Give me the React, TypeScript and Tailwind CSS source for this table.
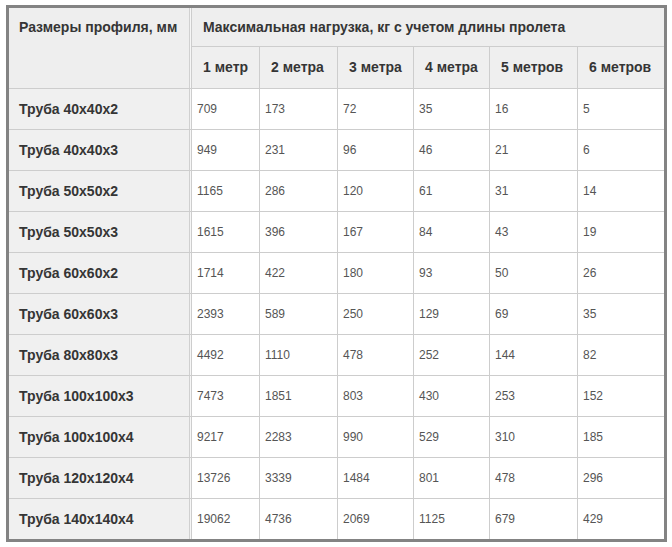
import React from "react";

const rows: [string, number[]][] = [
  ["Труба 40x40x2", [709, 173, 72, 35, 16, 5]],
  ["Труба 40x40x3", [949, 231, 96, 46, 21, 6]],
  ["Труба 50x50x2", [1165, 286, 120, 61, 31, 14]],
  ["Труба 50x50x3", [1615, 396, 167, 84, 43, 19]],
  ["Труба 60x60x2", [1714, 422, 180, 93, 50, 26]],
  ["Труба 60x60x3", [2393, 589, 250, 129, 69, 35]],
  ["Труба 80x80x3", [4492, 1110, 478, 252, 144, 82]],
  ["Труба 100x100x3", [7473, 1851, 803, 430, 253, 152]],
  ["Труба 100x100x4", [9217, 2283, 990, 529, 310, 185]],
  ["Труба 120x120x4", [13726, 3339, 1484, 801, 478, 296]],
  ["Труба 140x140x4", [19062, 4736, 2069, 1125, 679, 429]],
];

const spans = ["1 метр", "2 метра", "3 метра", "4 метра", "5 метров", "6 метров"];

export default function App() {
  return (
    <div
      className="w-[672px] h-[547px] bg-white pl-[6px] pt-[5px]"
      style={{ fontFamily: '"Liberation Sans", Arial, sans-serif' }}
    >
      <div className="w-[661px] border-[3px] border-[#838383] bg-[#cdcdcd]">
        <div className="grid grid-cols-[182px_67px_77px_75px_75px_87px_86px] grid-rows-[38px_41px_repeat(11,40px)] gap-px">
          <div className="row-span-2 bg-[#eeeeee] pl-[10px] pt-[10px] text-[14px] font-bold text-[#353535] leading-[18px] shadow-[inset_-1px_0_0_#f6f6f6,inset_-2px_0_0_#d0d0d0]">
            Размеры профиля, мм
          </div>
          <div className="col-span-6 bg-[#eeeeee] pl-[11px] flex items-center text-[14px] font-bold text-[#353535]">
            Максимальная нагрузка, кг с учетом длины пролета
          </div>
          {spans.map((s) => (
            <div
              key={s}
              className="bg-[#efefef] pl-[11px] flex items-center text-[14px] font-bold text-[#353535]"
            >
              {s}
            </div>
          ))}
          {rows.map(([name, vals]) => (
            <React.Fragment key={name}>
              <div className="bg-[#f0f0f0] pl-[10px] flex items-center text-[14px] font-bold text-[#353535] shadow-[inset_-1px_0_0_#f6f6f6,inset_-2px_0_0_#d0d0d0]">
                {name}
              </div>
              {vals.map((v, i) => (
                <div
                  key={i}
                  className="bg-white pl-[5px] flex items-center text-[12px] text-[#555555]"
                >
                  {v}
                </div>
              ))}
            </React.Fragment>
          ))}
        </div>
      </div>
    </div>
  );
}
